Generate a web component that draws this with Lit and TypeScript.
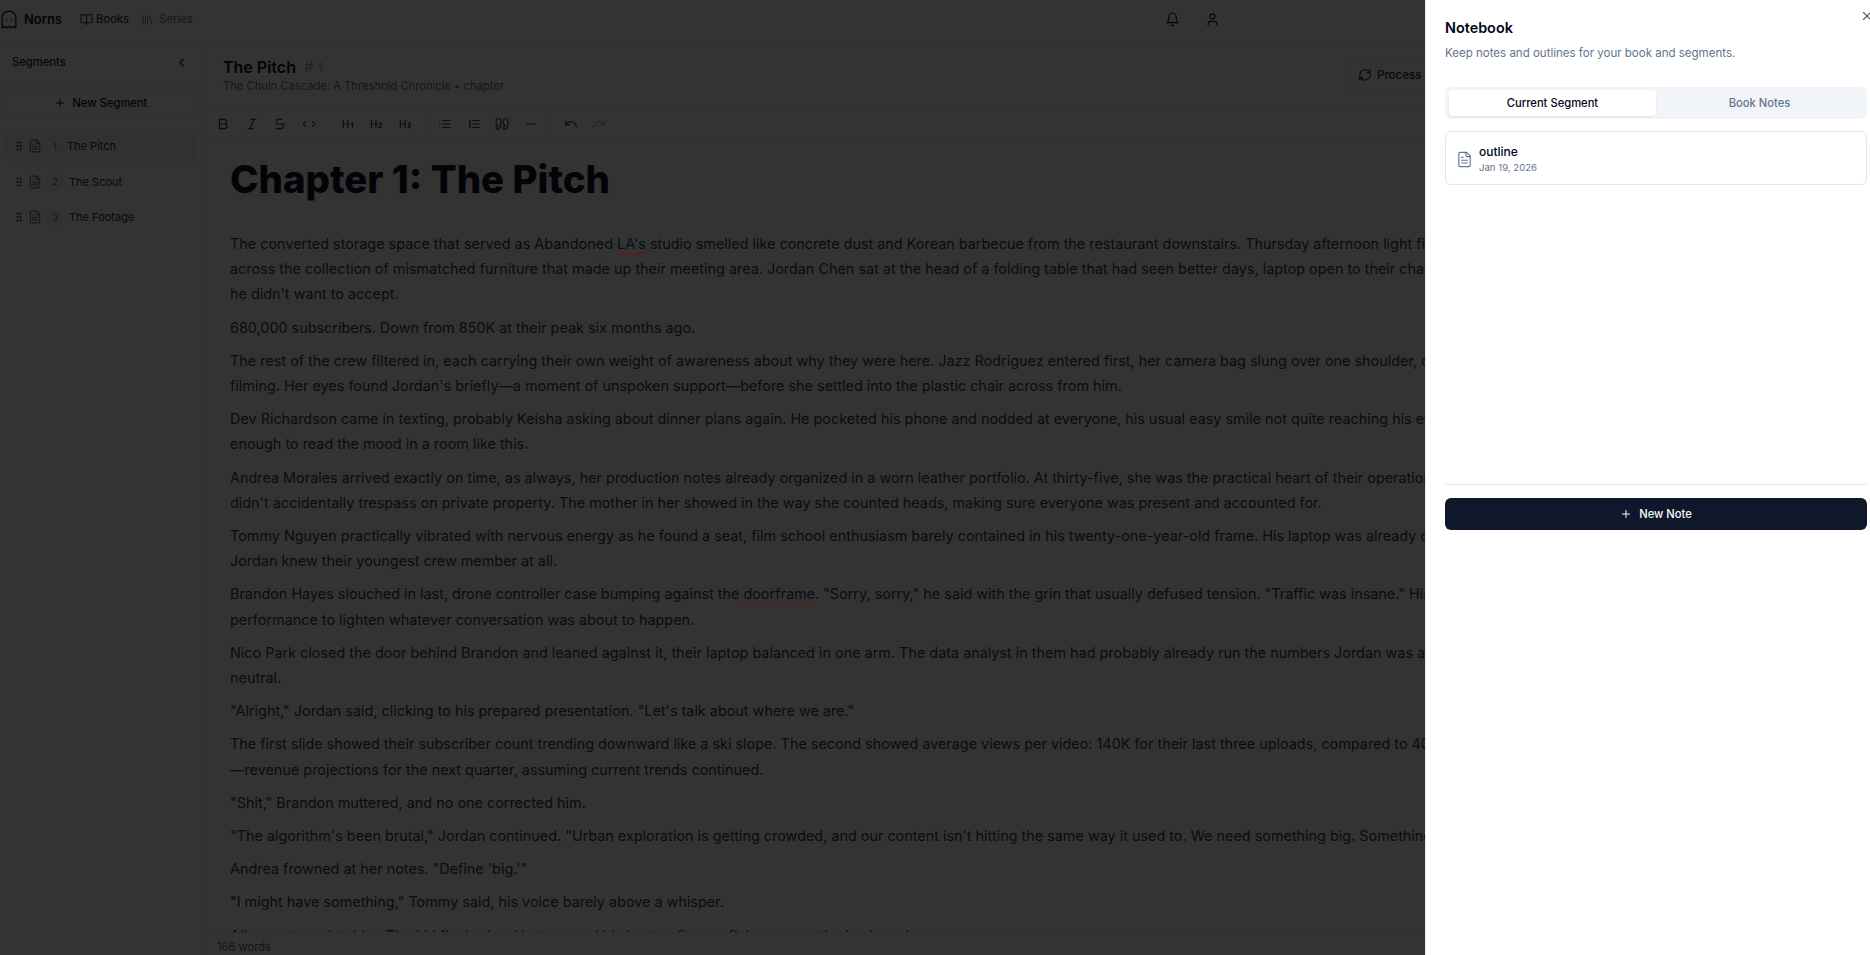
import { LitElement, html, css, svg } from "lit";
import { customElement } from "lit/decorators.js";

const I: Record<string, any> = {
  book: svg`<path d="M12 7v14"/><path d="M3 18a1 1 0 0 1-1-1V4a1 1 0 0 1 1-1h5a4 4 0 0 1 4 4 4 4 0 0 1 4-4h5a1 1 0 0 1 1 1v13a1 1 0 0 1-1 1h-6a3 3 0 0 0-3 3 3 3 0 0 0-3-3z"/>`,
  library: svg`<path d="m16 6 4 14"/><path d="M12 6v14"/><path d="M8 8v12"/><path d="M4 4v16"/>`,
  bell: svg`<path d="M6 8a6 6 0 0 1 12 0c0 7 3 9 3 9H3s3-2 3-9"/><path d="M10.3 21a1.94 1.94 0 0 0 3.4 0"/>`,
  user: svg`<path d="M19 21v-2a4 4 0 0 0-4-4H9a4 4 0 0 0-4 4v2"/><circle cx="12" cy="7" r="4"/>`,
  refresh: svg`<path d="M3 12a9 9 0 0 1 9-9 9.75 9.75 0 0 1 6.74 2.74L21 8"/><path d="M21 3v5h-5"/><path d="M21 12a9 9 0 0 1-9 9 9.75 9.75 0 0 1-6.74-2.74L3 16"/><path d="M8 16H3v5"/>`,
  chevron: svg`<path d="m15 18-6-6 6-6"/>`,
  plus: svg`<path d="M5 12h14"/><path d="M12 5v14"/>`,
  x: svg`<path d="M18 6 6 18"/><path d="m6 6 12 12"/>`,
  file: svg`<path d="M15 2H6a2 2 0 0 0-2 2v16a2 2 0 0 0 2 2h12a2 2 0 0 0 2-2V7Z"/><path d="M14 2v4a2 2 0 0 0 2 2h4"/><path d="M10 9H8"/><path d="M16 13H8"/><path d="M16 17H8"/>`,
  grip: svg`<circle cx="9" cy="12" r="1.6" fill="currentColor"/><circle cx="9" cy="5" r="1.6" fill="currentColor"/><circle cx="9" cy="19" r="1.6" fill="currentColor"/><circle cx="15" cy="12" r="1.6" fill="currentColor"/><circle cx="15" cy="5" r="1.6" fill="currentColor"/><circle cx="15" cy="19" r="1.6" fill="currentColor"/>`,
  bold: svg`<path d="M6 12h9a4 4 0 0 1 0 8H7a1 1 0 0 1-1-1V5a1 1 0 0 1 1-1h7a4 4 0 0 1 0 8"/>`,
  italic: svg`<line x1="19" x2="10" y1="4" y2="4"/><line x1="14" x2="5" y1="20" y2="20"/><line x1="15" x2="9" y1="4" y2="20"/>`,
  strike: svg`<path d="M16 4H9a3 3 0 0 0-2.83 4"/><path d="M14 12a4 4 0 0 1 0 8H6"/><line x1="4" x2="20" y1="12" y2="12"/>`,
  code: svg`<path d="m18 16 4-4-4-4"/><path d="m6 8-4 4 4 4"/>`,
  h1: svg`<path d="M4 12h8"/><path d="M4 18V6"/><path d="M12 18V6"/><path d="m17 12 3-2v8"/>`,
  h2: svg`<path d="M4 12h8"/><path d="M4 18V6"/><path d="M12 18V6"/><path d="M21 18h-4c0-4 4-3 4-6 0-1.5-2-2.5-4-1"/>`,
  h3: svg`<path d="M4 12h8"/><path d="M4 18V6"/><path d="M12 18V6"/><path d="M17.5 10.5c1.7-1 3.5 0 3.5 1.5a2 2 0 0 1-2 2"/><path d="M17 17.5c2 1.5 4 .3 4-1.5a2 2 0 0 0-2-2"/>`,
  ul: svg`<path d="M3 12h.01"/><path d="M3 18h.01"/><path d="M3 6h.01"/><path d="M8 12h13"/><path d="M8 18h13"/><path d="M8 6h13"/>`,
  ol: svg`<path d="M10 12h11"/><path d="M10 18h11"/><path d="M10 6h11"/><path d="M4 10h2"/><path d="M4 6h1v4"/><path d="M6 18H4c0-1 2-2 2-3s-1-1.5-2-1"/>`,
  quote: svg`<path d="M3 21c3 0 7-1 7-8V5c0-1.25-.756-2.017-2-2H4c-1.25 0-2 .75-2 1.972V11c0 1.25.75 2 2 2 1 0 1 0 1 1v1c0 1-1 2-2 2s-1 .008-1 1.031V20c0 1 0 1 1 1z"/><path d="M15 21c3 0 7-1 7-8V5c0-1.25-.757-2.017-2-2h-4c-1.25 0-2 .75-2 1.972V11c0 1.25.75 2 2 2h.75c0 2.25.25 4-2.75 4v3c0 1 0 1 1 1z"/>`,
  hr: svg`<path d="M5 12h14"/>`,
  undo: svg`<path d="M3 7v6h6"/><path d="M21 17a9 9 0 0 0-9-9 9 9 0 0 0-6 2.3L3 13"/>`,
  redo: svg`<path d="M21 7v6h-6"/><path d="M3 17a9 9 0 0 1 9-9 9 9 0 0 1 6 2.3l3 2.7"/>`,
};

const icon = (name: string, cls = "") =>
  html`<svg class="ic ${cls}" viewBox="0 0 24 24" fill="none" stroke="currentColor" stroke-width="2" stroke-linecap="round" stroke-linejoin="round">${I[name]}</svg>`;

const ghost = html`<svg class="logo" viewBox="0 0 15 18" fill="none" stroke="currentColor" stroke-width="1.2" stroke-linecap="round" stroke-linejoin="round"><path d="M1 17V7.5a6.5 6.5 0 0 1 13 0V17l-2.2-1.6L9.6 17l-2.1-1.6L5.4 17l-2.2-1.6z"/><path d="M5.2 9h.01M9.8 9h.01"/></svg>`;

const bad = (s: string) => html`<span class="bad">${s}</span>`;

const paragraphs: any[][] = [
  [html`The converted storage space that served as Abandoned ${bad("LA's")} studio smelled like concrete dust and Korean barbecue from the restaurant downstairs. Thursday afternoon light filtered`,
   "across the collection of mismatched furniture that made up their meeting area. Jordan Chen sat at the head of a folding table that had seen better days, laptop open to their channel",
   "he didn't want to accept."],
  ["680,000 subscribers. Down from 850K at their peak six months ago."],
  ["The rest of the crew filtered in, each carrying their own weight of awareness about why they were here. Jazz Rodriguez entered first, her camera bag slung over one shoulder, camera",
   "filming. Her eyes found Jordan's briefly—a moment of unspoken support—before she settled into the plastic chair across from him."],
  ["Dev Richardson came in texting, probably Keisha asking about dinner plans again. He pocketed his phone and nodded at everyone, his usual easy smile not quite reaching his eyes",
   "enough to read the mood in a room like this."],
  ["Andrea Morales arrived exactly on time, as always, her production notes already organized in a worn leather portfolio. At thirty-five, she was the practical heart of their operation",
   "didn't accidentally trespass on private property. The mother in her showed in the way she counted heads, making sure everyone was present and accounted for."],
  ["Tommy Nguyen practically vibrated with nervous energy as he found a seat, film school enthusiasm barely contained in his twenty-one-year-old frame. His laptop was already open",
   "Jordan knew their youngest crew member at all."],
  [html`Brandon Hayes slouched in last, drone controller case bumping against the ${bad("doorframe")}. "Sorry, sorry," he said with the grin that usually defused tension. "Traffic was insane." His`,
   "performance to lighten whatever conversation was about to happen."],
  ["Nico Park closed the door behind Brandon and leaned against it, their laptop balanced in one arm. The data analyst in them had probably already run the numbers Jordan was about",
   "neutral."],
  [`"Alright," Jordan said, clicking to his prepared presentation. "Let's talk about where we are."`],
  ["The first slide showed their subscriber count trending downward like a ski slope. The second showed average views per video: 140K for their last three uploads, compared to 400K",
   "—revenue projections for the next quarter, assuming current trends continued."],
  [`"Shit," Brandon muttered, and no one corrected him.`],
  [`"The algorithm's been brutal," Jordan continued. "Urban exploration is getting crowded, and our content isn't hitting the same way it used to. We need something big. Something`],
  [`Andrea frowned at her notes. "Define 'big.'"`],
  [`"I might have something," Tommy said, his voice barely above a whisper.`],
  ["All eyes turned to him. The kid flushed red but opened his laptop, fingers flying across the keyboard."],
];

const segments = [
  { n: 1, t: "The Pitch", active: true },
  { n: 2, t: "The Scout", active: false },
  { n: 3, t: "The Footage", active: false },
];

@customElement("app-root")
export class AppRoot extends LitElement {
  static styles = css`
    :host { display: block; position: relative; width: 100%; height: 100vh; overflow: hidden; background: #fff; color: #0f172a; font-family: Inter, "Liberation Sans", sans-serif; }
    * { box-sizing: border-box; }
    .ic { display: block; flex: none; width: 14px; height: 14px; }
    .app { display: flex; flex-direction: column; height: 100%; }
    .top { flex: none; height: 43px; border-bottom: 1px solid #e2e8f0; display: flex; align-items: center; padding: 0 0 4px 1px; }
    .logo { display: block; flex: none; width: 16px; height: 19px; }
    .brand { font-size: 13px; font-weight: 600; margin-left: 7px; width: 51px; }
    .nav { display: flex; align-items: center; gap: 3px; font-size: 11.2px; font-weight: 500; color: #334155; }
    .nav .ic { width: 13px; height: 13px; }
    .nav.books { margin-left: 5px; }
    .nav.series { margin-left: 12px; gap: 5px; color: #7b8aa0; }
    .top-actions { margin-left: auto; margin-right: 650px; display: flex; gap: 25px; }
    .top-actions .ic { width: 15px; height: 15px; stroke-width: 1.8; }
    .body { flex: 1; display: flex; min-height: 0; }
    .side { flex: none; width: 204px; border-right: 1px solid #e2e8f0; display: flex; flex-direction: column; }
    .side-head { height: 39px; flex: none; border-bottom: 1px solid #e2e8f0; display: flex; align-items: center; justify-content: space-between; padding: 0 15px 0 12px; font-size: 11.2px; font-weight: 500; color: #1e293b; }
    .side-head .ic { width: 13px; height: 13px; color: #0f172a; }
    .new-seg { margin: 8px 7px 0 5px; height: 26px; border: 1px solid #e2e8f0; border-radius: 6px; display: flex; align-items: center; justify-content: center; gap: 7px; font-size: 11.2px; font-weight: 500; }
    .new-seg .ic { width: 12px; height: 12px; }
    .seg-list { margin: 14px 7px 0 5px; display: flex; flex-direction: column; gap: 3.5px; }
    .seg { height: 32px; border-radius: 6px; display: flex; align-items: center; padding-left: 8px; font-size: 11px; color: #1e293b; }
    .seg.active { background: #f1f5f9; }
    .seg .grip { width: 12px; height: 12px; color: #64748b; }
    .seg .doc { width: 14px; height: 14px; margin-left: 3px; color: #64748b; }
    .num { width: 16px; height: 16px; border-radius: 4px; margin: 0 6px 0 5px; display: flex; align-items: center; justify-content: center; font-size: 9.6px; color: #64748b; background: #f1f5f9; }
    .seg.active .num { background: none; margin-right: 4px; }
    .main { flex: 1; min-width: 0; display: flex; flex-direction: column; }
    .doc-head { flex: none; height: 65px; border-bottom: 1px solid #e2e8f0; display: flex; align-items: center; padding-left: 19px; }
    .doc-title { display: flex; align-items: center; font-size: 16px; font-weight: 600; line-height: 20px; }
    .hash { font-size: 15px; font-weight: 400; color: #94a3b8; margin-left: 8px; }
    .hash-n { font-size: 11px; font-weight: 400; color: #94a3b8; margin-left: 5px; }
    .doc-sub { font-size: 11.2px; color: #64748b; margin-top: 2px; }
    .process { margin-left: auto; margin-right: 420px; height: 28px; width: 103px; flex: none; border: 1px solid #e2e8f0; border-radius: 6px; display: flex; align-items: center; gap: 5px; padding-left: 10px; font-size: 11.5px; font-weight: 500; color: #1e293b; }
    .toolbar { flex: none; height: 33px; border-bottom: 1px solid #e2e8f0; display: flex; align-items: center; padding-left: 7px; color: #334155; }
    .tb { width: 24px; height: 24px; display: flex; align-items: center; justify-content: center; margin-right: 4.67px; }
    .tb.dim { color: #94a3b8; }
    .gap { margin-left: 10px; }
    .sep { width: 1px; height: 20px; background: #e2e8f0; margin: 0 7.3px 0 3px; }
    .scroll { flex: 1; min-height: 0; overflow: hidden; padding: 10px 0 0 26px; }
    h1 { margin: 0 0 24px; font-size: 38.4px; line-height: 56px; font-weight: 800; white-space: nowrap; }
    .p { margin-bottom: 8px; font-size: 14.4px; line-height: 25.2px; color: #334155; white-space: nowrap; }
    .bad { position: relative; z-index: 2; color: #0a0d11; text-decoration: underline wavy #7a0808; text-decoration-thickness: 1px; text-underline-offset: 2px; }
    .status { flex: none; height: 23px; border-top: 1px solid #e2e8f0; display: flex; align-items: center; padding: 6px 0 0 13px; font-size: 11.2px; color: #64748b; }
    .overlay { position: absolute; inset: 0; z-index: 1; background: rgba(0, 0, 0, 0.8); }
    .panel { position: absolute; z-index: 3; top: 0; right: 0; bottom: 0; width: 445px; background: #fff; border-left: 1px solid #e2e8f0; padding: 0 3px 0 19px; display: flex; flex-direction: column; }
    .close { position: absolute; top: 9px; right: -4px; width: 14px; height: 14px; color: #475569; }
    .p-title { margin-top: 18px; font-size: 14.4px; line-height: 20px; font-weight: 600; color: #020617; }
    .p-sub { margin-top: 6px; font-size: 11.52px; line-height: 18px; color: #64748b; }
    .tabs { margin-top: 25px; height: 32px; background: #f1f5f9; border-radius: 6px; display: grid; grid-template-columns: 1fr 1fr; padding: 3px 4px; font-size: 11.2px; font-weight: 500; color: #64748b; }
    .tab { display: flex; align-items: center; justify-content: center; border-radius: 4px; }
    .tab.on { background: #fff; color: #020617; box-shadow: 0 1px 2px rgba(0, 0, 0, 0.08); }
    .note { margin-top: 12px; height: 54px; border: 1px solid #e2e8f0; border-radius: 6px; display: flex; align-items: center; gap: 6px; padding: 2px 0 0 10px; }
    .note .ic { color: #64748b; width: 17px; height: 17px; stroke-width: 1.6; }
    .note-name { font-size: 12px; font-weight: 500; line-height: 16px; color: #020617; }
    .note-date { font-size: 9.6px; line-height: 14px; color: #64748b; margin-top: 1px; }
    .spacer { height: 300px; flex: none; border-bottom: 1px solid #e2e8f0; }
    .new-note { margin-top: 13px; height: 32px; border-radius: 6px; background: #0f172a; color: #f8fafc; display: flex; align-items: center; justify-content: center; gap: 7px; font-size: 11.2px; font-weight: 500; }
    .new-note .ic { width: 12px; height: 12px; }
  `;

  render() {
    const tb = (n: string, c = "") => html`<div class="tb ${c}">${icon(n)}</div>`;
    return html`
      <div class="app">
        <header class="top">
          ${ghost}
          <div class="brand">Norns</div>
          <div class="nav books">${icon("book")}Books</div>
          <div class="nav series">${icon("library")}Series</div>
          <div class="top-actions">${icon("bell")}${icon("user")}</div>
        </header>
        <div class="body">
          <aside class="side">
            <div class="side-head">Segments ${icon("chevron")}</div>
            <div class="new-seg">${icon("plus")}New Segment</div>
            <div class="seg-list">
              ${segments.map(
                (s) => html`<div class="seg ${s.active ? "active" : ""}">
                  ${icon("grip", "grip")}${icon("file", "doc")}
                  <div class="num">${s.n}</div>${s.t}
                </div>`
              )}
            </div>
          </aside>
          <main class="main">
            <div class="doc-head">
              <div>
                <div class="doc-title">The Pitch<span class="hash">#</span><span class="hash-n">1</span></div>
                <div class="doc-sub">The Chuin Cascade: A Threshold Chronicle • chapter</div>
              </div>
              <div class="process">${icon("refresh")}Process</div>
            </div>
            <div class="toolbar">
              ${tb("bold")}${tb("italic")}${tb("strike")}${tb("code")}
              <div class="gap"></div>
              ${tb("h1")}${tb("h2")}${tb("h3")}
              <div class="sep"></div>
              ${tb("ul")}${tb("ol")}${tb("quote")}${tb("hr")}
              <div class="sep"></div>
              ${tb("undo")}${tb("redo", "dim")}
            </div>
            <div class="scroll">
              <h1>Chapter 1: The Pitch</h1>
              ${paragraphs.map((p) => html`<div class="p">${p.map((l) => html`<div>${l}</div>`)}</div>`)}
            </div>
            <div class="status">166 words</div>
          </main>
        </div>
      </div>
      <div class="overlay"></div>
      <aside class="panel">
        ${icon("x", "close")}
        <div class="p-title">Notebook</div>
        <div class="p-sub">Keep notes and outlines for your book and segments.</div>
        <div class="tabs"><div class="tab on">Current Segment</div><div class="tab">Book Notes</div></div>
        <div class="note">
          ${icon("file")}
          <div><div class="note-name">outline</div><div class="note-date">Jan 19, 2026</div></div>
        </div>
        <div class="spacer"></div>
        <div class="new-note">${icon("plus")}New Note</div>
      </aside>
    `;
  }
}
